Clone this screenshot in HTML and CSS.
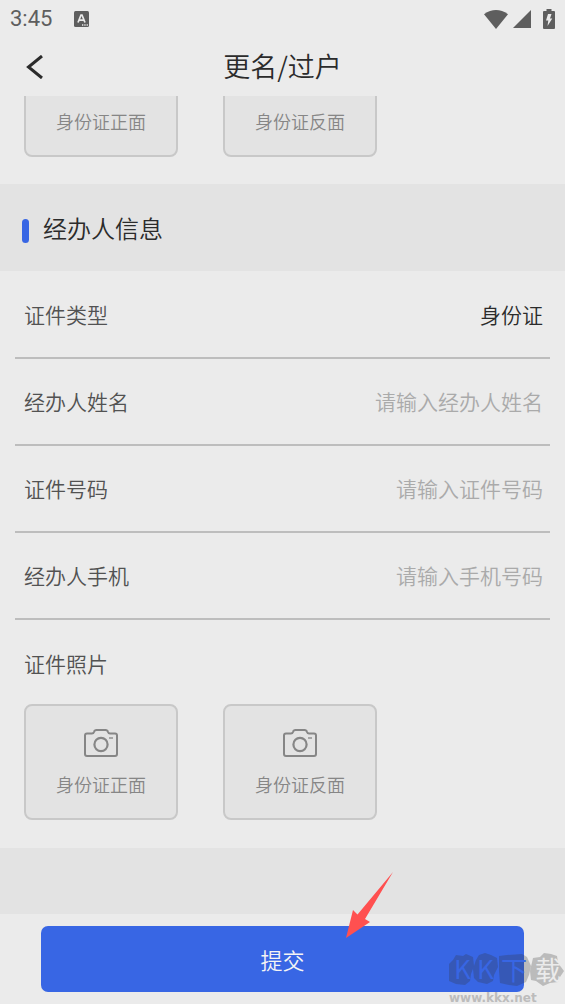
FILE: index.html
```html
<!DOCTYPE html>
<html lang="zh-CN">
<head>
<meta charset="utf-8">
<meta name="viewport" content="width=device-width, initial-scale=1">
<title>更名/过户</title>
<link rel="stylesheet" href="styles.css">
</head>
<body>
<svg class="symbols" aria-hidden="true">
  <symbol id="camera" viewBox="0 0 34 28">
    <path d="M3 4.500h5q1.500 0 2-1.500.5-2 2.500-2h9q2 0 2.500 2 .5 1.500 2 1.500h5q2 0 2 2v18.500q0 2-2 2h-28q-2 0-2-2v-18.500q0-2 2-2z" fill="none" stroke="currentColor" stroke-width="2"/>
    <circle cx="17" cy="15.500" r="6.600" fill="none" stroke="currentColor" stroke-width="2.200"/>
    <path d="M25 9h4" stroke="currentColor" stroke-width="1.300"/>
  </symbol>
</svg>
<div class="app">
  <div class="status">
    <span class="time">3:45</span>
    <svg class="keyboard" viewBox="0 0 15 16" aria-hidden="true">
      <rect width="15" height="16" rx="1.500" fill="#5e5e5e"/>
      <path d="M4 11.500 7 4h1l3 7.500M5.300 9.200h4.400" fill="none" stroke="#ebebeb" stroke-width="1.700"/>
      <path d="M8 14h1.300M10.300 14h1.300M12.600 14h1.300" stroke="#ebebeb" stroke-width="1.300"/>
    </svg>
    <div class="signals">
      <svg class="wifi" viewBox="0 0 24 19" aria-hidden="true"><path d="M0 4.200Q12-4.200 24 4.200L12 19z" fill="#5e5e5e"/></svg>
      <svg class="cell" viewBox="0 0 18 18" aria-hidden="true"><path d="M18 0v18H0z" fill="#5e5e5e"/></svg>
      <svg class="battery" viewBox="0 0 12 20" aria-hidden="true"><path d="M3.500 0h5v2H11q1 0 1 1v16q0 1-1 1H1q-1 0-1-1V3q0-1 1-1h2.500z" fill="#5e5e5e"/><path d="M5 5h3.500L7 9.500H9.300L4.500 17l.8-5.500H3z" fill="#ebebeb"/></svg>
    </div>
  </div>
  <header class="header">
    <button class="back" type="button" aria-label="返回">
      <svg viewBox="0 0 18 24" aria-hidden="true"><path d="M16 1 2.500 12 16 23" fill="none" stroke="#2b2b2b" stroke-width="3"/></svg>
    </button>
    <h1 class="title">更名/过户</h1>
  </header>
  <main class="content">
    <div class="cards clipped">
      <button class="card" type="button"><svg class="camera"><use href="#camera"/></svg><span>身份证正面</span></button>
      <button class="card" type="button"><svg class="camera"><use href="#camera"/></svg><span>身份证反面</span></button>
    </div>
    <h2 class="section">经办人信息</h2>
    <form class="form" id="agent">
      <div class="row"><label for="type">证件类型</label><input class="field" id="type" value="身份证" readonly></div>
      <div class="row"><label for="name">经办人姓名</label><input class="field" id="name" placeholder="请输入经办人姓名"></div>
      <div class="row"><label for="number">证件号码</label><input class="field" id="number" placeholder="请输入证件号码"></div>
      <div class="row"><label for="phone">经办人手机</label><input class="field" id="phone" type="tel" placeholder="请输入手机号码"></div>
      <p class="photos">证件照片</p>
      <div class="cards">
        <button class="card" type="button"><svg class="camera"><use href="#camera"/></svg><span>身份证正面</span></button>
        <button class="card" type="button"><svg class="camera"><use href="#camera"/></svg><span>身份证反面</span></button>
      </div>
    </form>
  </main>
  <footer class="footer">
    <button class="submit" type="submit" form="agent">提交</button>
    <svg class="arrow" viewBox="0 0 47 66" aria-hidden="true"><path d="M0 66 7 38l4.500 4.500L47 0 19 47l5 3z" fill="#ff5050"/></svg>
    <div class="watermark">
      <svg class="logo" viewBox="0 -10 116 50" aria-label="KK下载">
        <g fill="#333" fill-opacity=".26">
          <path d="M4 6 7 1l7 1 3-2 7 3 1 9-3 8-1 7-5 4-9-1-7-3-3-7 1-8z"/>
          <path d="M27 6 30 1l6-2 6 2 6 3 1 9-4 8-1 6-6 3-9-2-4-4-1-9z"/>
          <path d="M50 2 58 1l15-1 5 3 4 9-2 9-3 7-9 4-8-1-9-2-1-12z"/>
          <path d="M84 4 91 3l4-4 7 1 6 2 1 7 6 8-4 6-2 5-8 1-7 3-7-5-5-1-1-9z"/>
        </g>
        <g class="logo-text"><text x="5" y="25">K</text><text x="28" y="25">K</text><text x="52" y="26">下</text><text class="light" x="86" y="26">载</text></g>
      </svg>
      <span class="site">www.kkx.net</span>
    </div>
  </footer>
</div>
</body>
</html>
```

FILE: styles.css
```css
* { box-sizing: border-box; }
body {
  margin: 0;
  background: #ebebeb;
  color: #2b2b2b;
  font-family: "Noto Sans CJK SC", sans-serif;
  font-size: 21px;
  font-weight: 350;
}
button, input { font: inherit; color: inherit; border: 0; margin: 0; padding: 0; background: none; }
h1, h2, p { margin: 0; font-weight: inherit; }
svg { display: block; flex: none; }
.symbols { position: absolute; width: 0; height: 0; }
.app { display: flex; flex-direction: column; min-height: 100vh; }

.status { display: flex; align-items: center; height: 38px; padding: 0 10px; color: #5e5e5e; }
.time { font: 400 22px/40px Roboto, sans-serif; }
.keyboard { width: 15px; height: 16px; margin-left: 22px; }
.signals { display: flex; align-items: center; margin-left: auto; }
.wifi { width: 24px; height: 19px; margin-right: 5px; }
.cell { width: 18px; height: 18px; margin-right: 12px; }
.battery { width: 12px; height: 20px; }

.header { display: grid; grid-template-columns: 56px 1fr 56px; align-items: center; height: 58px; }
.back { display: flex; justify-content: flex-end; padding-right: 12px; cursor: pointer; }
.back svg { width: 18px; height: 24px; }
.title { padding-bottom: 2px; font-size: 27px; line-height: 36px; text-align: center; }

.content { display: flex; flex: 1; flex-direction: column; background: #e3e3e3; }
.cards { display: flex; gap: 45px; padding: 0 24px 28px; }
.clipped { align-items: flex-end; height: 88px; padding-bottom: 27px; overflow: hidden; background: #ebebeb; }
.card {
  display: flex;
  flex-direction: column;
  align-items: center;
  gap: 13px;
  width: 154px;
  height: 116px;
  padding-top: 23px;
  flex: none;
  border: 2px solid #c8c8c8;
  border-radius: 8px;
  background: #e3e3e3;
  color: #868686;
  font-size: 18px;
  line-height: 28px;
}
.camera { width: 34px; height: 28px; }

.section { display: flex; align-items: center; gap: 14px; height: 87px; padding: 0 22px; font-size: 24px; line-height: 36px; }
.section::before { content: ""; width: 7px; height: 24px; margin-top: 6px; border-radius: 4px; background: #3866e4; }
.form { padding-top: 1px; background: #ebebeb; }
.row {
  display: flex;
  align-items: center;
  height: 87px;
  margin: 0 15px;
  padding: 0 7px 2px 9px;
  border-bottom: 2px solid #bdbdbd;
  line-height: 32px;
}
.row label, .photos { color: #525252; }
.field { flex: 1; min-width: 0; height: 32px; text-align: right; outline: 0; }
.field::placeholder { color: #aaa; opacity: 1; }
.photos { padding: 27px 24px 25px; line-height: 32px; }

.footer { position: relative; padding: 12px 41px; background: #ebebeb; }
.submit { display: block; width: 100%; height: 66px; border-radius: 7px; background: #3866e4; color: #f4f4f4; font-size: 22px; }
.arrow { position: absolute; left: 346px; top: -42px; width: 47px; height: 66px; }
.watermark { position: absolute; right: 0; bottom: -3px; width: 116px; pointer-events: none; }
.logo { width: 116px; height: 50px; margin-bottom: -4px; }
.logo-text { fill: #3866e4; font-size: 26px; font-weight: 400; }
.light { fill: #ebebeb; }
.site { display: block; color: #bcbcbc; font: 700 12px/17px "DejaVu Sans", sans-serif; }
```
